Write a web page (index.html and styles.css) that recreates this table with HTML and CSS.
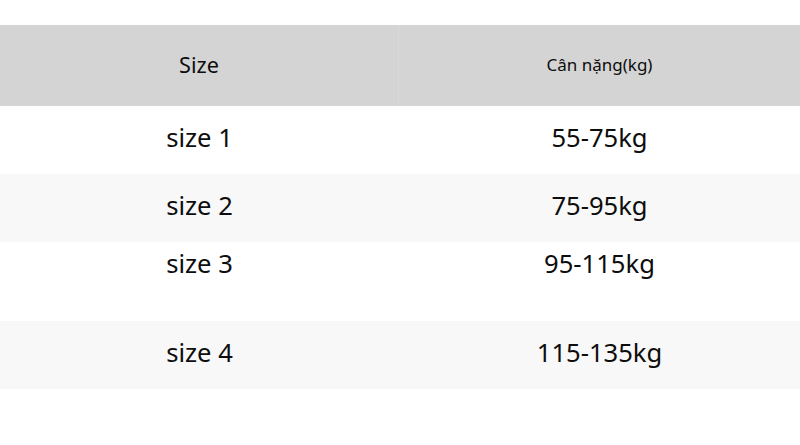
FILE: index.html
```html
<!DOCTYPE html>
<html lang="vi">
<head>
<meta charset="utf-8">
<link rel="stylesheet" href="styles.css">
</head>
<body>
<div class="table">
  <div class="row head">
    <div class="cell first">Size</div>
    <div class="cell small">Cân nặng(kg)</div>
  </div>
  <div class="row">
    <div class="cell">size 1</div>
    <div class="cell">55-75kg</div>
  </div>
  <div class="row alt">
    <div class="cell">size 2</div>
    <div class="cell">75-95kg</div>
  </div>
  <div class="row tall">
    <div class="cell">size 3</div>
    <div class="cell">95-115kg</div>
  </div>
  <div class="row alt">
    <div class="cell">size 4</div>
    <div class="cell">115-135kg</div>
  </div>
</div>
</body>
</html>
```
FILE: styles.css
```css
html, body {
  margin: 0;
  padding: 0;
  background: #ffffff;
}
body {
  font-family: "Noto Sans", "Open Sans", sans-serif;
  color: #0d0d0d;
}
.table {
  margin-top: 25px;
  width: 800px;
}
.row {
  display: grid;
  grid-template-columns: 399px 401px;
  height: 68px;
  font-size: 25.6px;
}
.row .cell {
  display: flex;
  align-items: center;
  justify-content: center;
  padding-bottom: 6px;
}
.head {
  height: 81px;
  background: #d4d4d4;
  font-size: 21.6px;
}
.head .cell {
  padding-bottom: 2px;
}
.head .first {
  border-right: 1px solid #dadada;
}
.head .small {
  font-size: 17px;
}
.alt {
  background: #f8f8f8;
}
.tall {
  height: 79px;
}
.tall .cell {
  align-items: flex-start;
  padding-top: 4px;
  padding-bottom: 0;
}
```
